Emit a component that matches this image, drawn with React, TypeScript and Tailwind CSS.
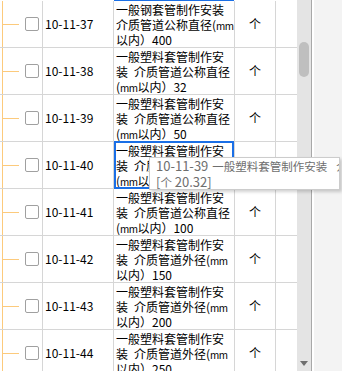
import React from "react";

type Row = { code: string; lines: string[]; selected?: boolean };

const SP = "\u2002";

const rows: Row[] = [
  { code: "10-11-37", lines: ["一般钢套管制作安装", "介质管道公称直径(mm", "以内）400"] },
  { code: "10-11-38", lines: ["一般塑料套管制作安", `装${SP}介质管道公称直径`, "(mm以内）32"] },
  { code: "10-11-39", lines: ["一般塑料套管制作安", `装${SP}介质管道公称直径`, "(mm以内）50"] },
  { code: "10-11-40", lines: ["一般塑料套管制作安", `装${SP}介质管道公称直径`, "(mm以内）63"], selected: true },
  { code: "10-11-41", lines: ["一般塑料套管制作安", `装${SP}介质管道公称直径`, "(mm以内）100"] },
  { code: "10-11-42", lines: ["一般塑料套管制作安", `装${SP}介质管道外径(mm`, "以内）150"] },
  { code: "10-11-43", lines: ["一般塑料套管制作安", `装${SP}介质管道外径(mm`, "以内）200"] },
  { code: "10-11-44", lines: ["一般塑料套管制作安", `装${SP}介质管道外径(mm`, "以内）250"] },
];

function Line({ text }: { text: string }) {
  const parts = text.split("mm");
  return (
    <div className="h-[15px] leading-[15px] whitespace-nowrap">
      {parts.map((p, i) => (
        <React.Fragment key={i}>
          {p}
          {i < parts.length - 1 && (
            <span className="text-[10px] tracking-[-0.6px]">mm</span>
          )}
        </React.Fragment>
      ))}
    </div>
  );
}

export default function App() {
  return (
    <div
      className="w-[342px] h-[371px] overflow-hidden bg-white relative flex text-black"
      style={{ fontFamily: "'Noto Sans CJK SC', 'Noto Sans', sans-serif" }}
    >
      {/* table */}
      <div className="w-[297px] flex flex-col shrink-0">
        <div className="h-px flex shrink-0">
          <div className="w-[114px]" />
          <div className="w-[120px] bg-[#1a6fe6]" />
        </div>
        {rows.map((r) => (
          <div
            key={r.code}
            className="h-[47px] shrink-0 flex border-b border-[#d6d6d6]"
          >
            <div className="w-[43px] shrink-0 border-r border-[#d6d6d6] pl-[2px] flex">
              <div className="border-l border-[#fcca7c] flex items-center w-full">
                <div className="w-[16px] h-px bg-[#fcca7c]" />
                <div className="ml-[6px] w-[14px] h-[14px] border border-[#a0a0a0] rounded-[2px] bg-white" />
              </div>
            </div>
            <div className="w-[71px] shrink-0 border-r border-[#d6d6d6] pl-[2px] flex items-center text-[12px]">
              {r.code}
            </div>
            <div className="w-[121px] shrink-0 border-r border-[#d6d6d6] pl-[2px] flex flex-col justify-center text-[12px] relative overflow-visible">
              <div className="overflow-hidden">
                {r.lines.map((l, i) => (
                  <Line key={i} text={l} />
                ))}
              </div>
              {r.selected && (
                <div className="absolute left-0 right-0 -top-px -bottom-px border-2 border-[#1a6fe6]" />
              )}
            </div>
            <div className="w-[41px] shrink-0 border-r border-[#d6d6d6] flex items-center justify-center text-[12px]">
              个
            </div>
            <div className="flex-1" />
          </div>
        ))}
      </div>

      {/* scrollbar */}
      <div className="w-[14px] shrink-0 bg-[#e4e4e4] flex flex-col items-center relative">
        <div className="mt-[42px] w-[10px] h-[35px] rounded-full bg-[#bfbfbf]" />
        <div className="flex-1" />
        <svg width="8" height="5" viewBox="0 0 8 5" className="mb-[5px]">
          <polygon points="0,0 8,0 4,5" fill="#6e6e6e" />
        </svg>
      </div>
      <div className="w-px shrink-0 bg-[#a8a8a8]" />
      <div className="w-[2px] shrink-0 bg-white" />
      <div className="flex-1 bg-[#f3f3f3]" />

      {/* tooltip */}
      <div className="absolute left-[149px] top-[157px] w-[191px] h-[33px] bg-white border border-[#cccccc] shadow-[2px_2px_3px_rgba(0,0,0,0.18)] overflow-hidden pl-[6px] text-[13px] leading-[16px] text-[#6e6e6e] whitespace-nowrap">
        <div>
          10-11-39
          <span className="ml-[4px] text-[11.5px]">一般塑料套管制作安装</span>
          <span className="ml-[9px] text-[11.5px]">介质管道公称直径</span>
        </div>
        <div>
          [<span className="text-[11.5px]">个</span> 20.32]
        </div>
      </div>
    </div>
  );
}
